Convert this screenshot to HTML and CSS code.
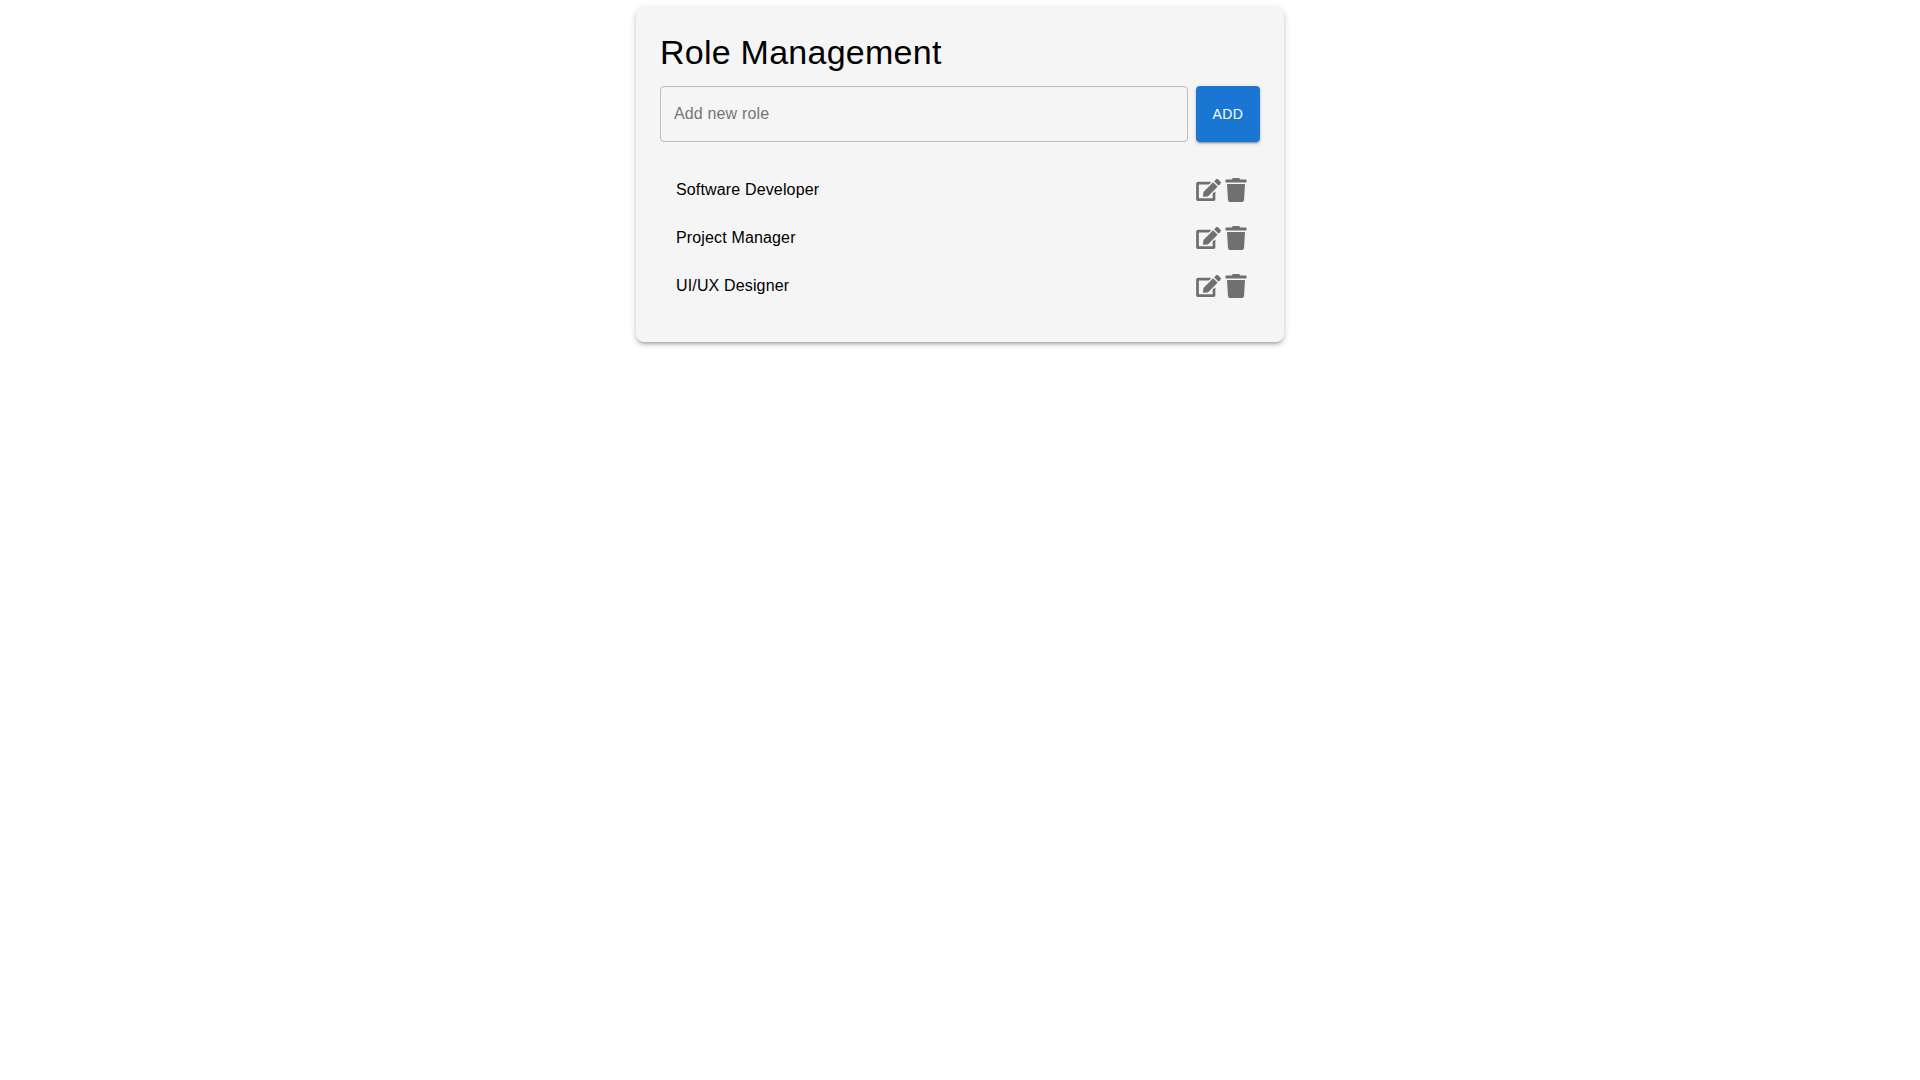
FILE: index.html
```html
<!DOCTYPE html>
<html lang="en">
<head>
    <meta charset="UTF-8">
    <meta name="viewport" content="width=device-width, initial-scale=1.0">
    <title>Role Management</title>
    <link rel="stylesheet" href="styles.css">
</head>
<body>
    <div class="role-card">
        <h1 class="role-title">Role Management</h1>

        <!-- add form -->
        <div class="add-row">
            <input class="role-input" type="text" placeholder="Add new role">
            <button class="add-button">Add</button>
        </div>

        <ul class="role-list">
            <li class="role-item">
                <span class="role-name">Software Developer</span>
                <span class="role-actions">
                    <svg class="icon-edit" viewBox="0 0 576 512"><path d="M402.6 83.2l90.2 90.2c3.8 3.8 3.8 10 0 13.8L274.4 405.6l-92.8 10.3c-12.4 1.4-22.9-9.1-21.5-21.5l10.3-92.8L388.8 83.2c3.8-3.8 10-3.8 13.8 0zm162-22.9l-48.8-48.8c-15.2-15.2-39.9-15.2-55.2 0l-35.4 35.4c-3.8 3.8-3.8 10 0 13.8l90.2 90.2c3.8 3.8 10 3.8 13.8 0l35.4-35.4c15.2-15.3 15.2-40 0-55.2zM384 346.2V448H64V128h229.8c3.2 0 6.2-1.3 8.5-3.5l40-40c7.6-7.6 2.2-20.5-8.5-20.5H48C21.5 64 0 85.5 0 112v352c0 26.5 21.5 48 48 48h352c26.5 0 48-21.5 48-48V306.2c0-10.7-12.9-16-20.5-8.5l-40 40c-2.2 2.3-3.5 5.3-3.5 8.5z"/></svg>
                    <svg class="icon-trash" viewBox="0 0 448 512"><path d="M432 32H312l-9.4-18.7A24 24 0 0 0 281.1 0H166.8a23.72 23.72 0 0 0-21.4 13.3L136 32H16A16 16 0 0 0 0 48v32a16 16 0 0 0 16 16h416a16 16 0 0 0 16-16V48a16 16 0 0 0-16-16zM53.2 467a48 48 0 0 0 47.9 45h245.8a48 48 0 0 0 47.9-45L416 128H32z"/></svg>
                </span>
            </li>
            <li class="role-item">
                <span class="role-name">Project Manager</span>
                <span class="role-actions">
                    <svg class="icon-edit" viewBox="0 0 576 512"><path d="M402.6 83.2l90.2 90.2c3.8 3.8 3.8 10 0 13.8L274.4 405.6l-92.8 10.3c-12.4 1.4-22.9-9.1-21.5-21.5l10.3-92.8L388.8 83.2c3.8-3.8 10-3.8 13.8 0zm162-22.9l-48.8-48.8c-15.2-15.2-39.9-15.2-55.2 0l-35.4 35.4c-3.8 3.8-3.8 10 0 13.8l90.2 90.2c3.8 3.8 10 3.8 13.8 0l35.4-35.4c15.2-15.3 15.2-40 0-55.2zM384 346.2V448H64V128h229.8c3.2 0 6.2-1.3 8.5-3.5l40-40c7.6-7.6 2.2-20.5-8.5-20.5H48C21.5 64 0 85.5 0 112v352c0 26.5 21.5 48 48 48h352c26.5 0 48-21.5 48-48V306.2c0-10.7-12.9-16-20.5-8.5l-40 40c-2.2 2.3-3.5 5.3-3.5 8.5z"/></svg>
                    <svg class="icon-trash" viewBox="0 0 448 512"><path d="M432 32H312l-9.4-18.7A24 24 0 0 0 281.1 0H166.8a23.72 23.72 0 0 0-21.4 13.3L136 32H16A16 16 0 0 0 0 48v32a16 16 0 0 0 16 16h416a16 16 0 0 0 16-16V48a16 16 0 0 0-16-16zM53.2 467a48 48 0 0 0 47.9 45h245.8a48 48 0 0 0 47.9-45L416 128H32z"/></svg>
                </span>
            </li>
            <li class="role-item">
                <span class="role-name">UI/UX Designer</span>
                <span class="role-actions">
                    <svg class="icon-edit" viewBox="0 0 576 512"><path d="M402.6 83.2l90.2 90.2c3.8 3.8 3.8 10 0 13.8L274.4 405.6l-92.8 10.3c-12.4 1.4-22.9-9.1-21.5-21.5l10.3-92.8L388.8 83.2c3.8-3.8 10-3.8 13.8 0zm162-22.9l-48.8-48.8c-15.2-15.2-39.9-15.2-55.2 0l-35.4 35.4c-3.8 3.8-3.8 10 0 13.8l90.2 90.2c3.8 3.8 10 3.8 13.8 0l35.4-35.4c15.2-15.3 15.2-40 0-55.2zM384 346.2V448H64V128h229.8c3.2 0 6.2-1.3 8.5-3.5l40-40c7.6-7.6 2.2-20.5-8.5-20.5H48C21.5 64 0 85.5 0 112v352c0 26.5 21.5 48 48 48h352c26.5 0 48-21.5 48-48V306.2c0-10.7-12.9-16-20.5-8.5l-40 40c-2.2 2.3-3.5 5.3-3.5 8.5z"/></svg>
                    <svg class="icon-trash" viewBox="0 0 448 512"><path d="M432 32H312l-9.4-18.7A24 24 0 0 0 281.1 0H166.8a23.72 23.72 0 0 0-21.4 13.3L136 32H16A16 16 0 0 0 0 48v32a16 16 0 0 0 16 16h416a16 16 0 0 0 16-16V48a16 16 0 0 0-16-16zM53.2 467a48 48 0 0 0 47.9 45h245.8a48 48 0 0 0 47.9-45L416 128H32z"/></svg>
                </span>
            </li>
        </ul>
    </div>
</body>
</html>
```

FILE: styles.css
```css
body {
    font-family: "Liberation Sans", Arial, sans-serif;
    background-color: #fff;
    margin: 0;
    padding: 8px 0;
}

.role-card {
    box-sizing: border-box;
    width: 648px;
    margin: 0 auto;
    padding: 24px;
    background-color: #f5f5f5;
    border-radius: 8px;
    box-shadow: 0 3px 3px -2px rgba(0,0,0,0.2), 0 3px 4px 0 rgba(0,0,0,0.14), 0 1px 8px 0 rgba(0,0,0,0.12);
}

.role-title {
    margin: 0 0 14px;
    font-size: 34px;
    font-weight: 400;
    line-height: 40px;
    letter-spacing: 0.25px;
    color: #000;
}

.add-row {
    display: flex;
    gap: 8px;
    margin-bottom: 16px;
}

.role-input {
    flex: 1;
    box-sizing: border-box;
    height: 56px;
    padding: 0 13px;
    font-family: inherit;
    font-size: 16px;
    letter-spacing: 0.15px;
    color: #000;
    background: transparent;
    border: 1px solid #bdbdbd;
    border-radius: 4px;
    outline: none;
}

.role-input::placeholder {
    color: #757575;
    opacity: 1;
}

.add-button {
    width: 64px;
    height: 56px;
    padding: 0;
    font-family: inherit;
    font-size: 14px;
    font-weight: 400;
    letter-spacing: 0.4px;
    text-transform: uppercase;
    color: #fff;
    background-color: #1976d2;
    border: none;
    border-radius: 4px;
    box-shadow: 0 3px 1px -2px rgba(0,0,0,0.2), 0 2px 2px 0 rgba(0,0,0,0.14), 0 1px 5px 0 rgba(0,0,0,0.12);
}

.role-list {
    list-style: none;
    margin: 0;
    padding: 8px 0;
}

.role-item {
    display: flex;
    align-items: center;
    justify-content: space-between;
    height: 48px;
    padding: 0 13px 0 16px;
}

.role-name {
    font-size: 16px;
    letter-spacing: 0.15px;
    color: #000;
}

.role-actions {
    display: flex;
    align-items: center;
    gap: 4px;
}

.role-actions svg {
    display: block;
    fill: #707070;
}

.icon-edit {
    width: 25px;
    height: 22px;
}

.icon-trash {
    width: 22px;
    height: 24px;
}
```
